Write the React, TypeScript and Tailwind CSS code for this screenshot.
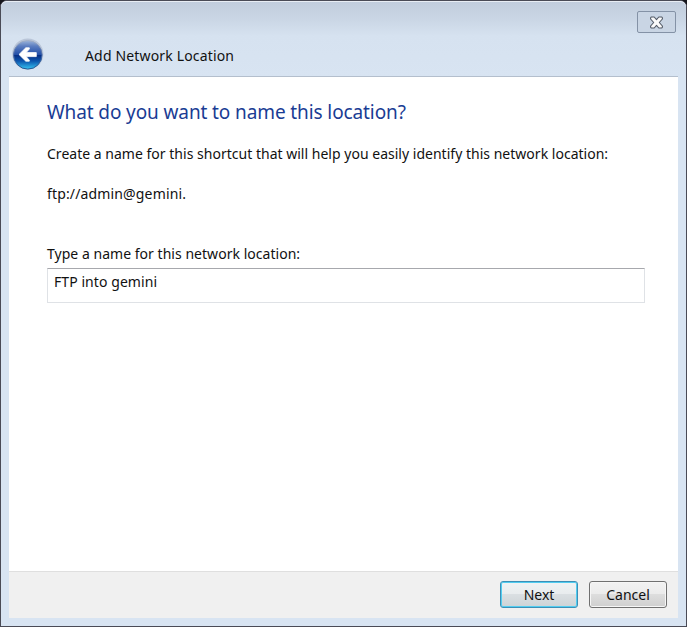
import { useState } from "react";

function BackIcon() {
  return (
    <svg viewBox="0 0 34 34" className="h-[34px] w-[34px]" aria-hidden="true">
      <defs>
        <linearGradient id="orb" x1="0" y1="0" x2="0" y2="1">
          <stop offset="0" stopColor="#9db5da" />
          <stop offset="0.2" stopColor="#5b7dc0" />
          <stop offset="0.49" stopColor="#2450a8" />
          <stop offset="0.5" stopColor="#062a80" />
          <stop offset="0.72" stopColor="#0c56ae" />
          <stop offset="1" stopColor="#35c4f2" />
        </linearGradient>
        <linearGradient id="rim" x1="0" y1="0" x2="0" y2="1">
          <stop offset="0" stopColor="#a3b0c6" />
          <stop offset="0.5" stopColor="#4d6ba5" />
          <stop offset="1" stopColor="#245792" />
        </linearGradient>
      </defs>
      <circle cx="16.8" cy="16" r="15.6" fill="#b9c5d8" />
      <circle cx="16.8" cy="16.8" r="14.3" fill="url(#orb)" stroke="url(#rim)" strokeWidth="1" />
      <path
        d="M8 16.5 L14.8 9.8 H18.3 V11 L15.2 14.6 H25.3 V18.6 H15.2 L18.3 22.2 V23.2 H14.8 Z"
        fill="#fff"
        stroke="#fff"
        strokeWidth="0.8"
        strokeLinejoin="round"
      />
    </svg>
  );
}

function CloseIcon() {
  return (
    <svg viewBox="0 0 15 13" className="h-[13px] w-[15px]" aria-hidden="true">
      <path
        d="M2.2 1 H5.2 L7.5 3.6 L9.8 1 H12.8 L13.4 1.8 V3 L10.3 6.5 L13.4 10 V11.2 L12.8 12 H9.8 L7.5 9.4 L5.2 12 H2.2 L1.6 11.2 V10 L4.7 6.5 L1.6 3 V1.8 Z"
        fill="#fafafa"
        stroke="#535a66"
        strokeWidth="1.1"
        strokeLinejoin="round"
      />
    </svg>
  );
}

export default function App() {
  const [name, setName] = useState("FTP into gemini");
  return (
    <div className="h-[627px] w-[687px] overflow-hidden bg-[#15151b] font-['Noto_Sans',sans-serif] text-[14px] leading-5 text-[#111]">
      <div className="flex h-full flex-col rounded-t-[7px] border border-[#4a4b56] bg-[#d8e4f2] px-2 pb-2">
        <header className="-mx-2 flex h-[75px] shrink-0 flex-col rounded-t-[6px] border-t border-[#e8edf4] bg-[linear-gradient(#c1cddd_0px,#c9d5e4_16px,#d6e2f0_34px,#d8e4f2_75px)] px-2">
          <div className="flex h-[35px] shrink-0 justify-end pt-[9px] pr-[2px]">
            <button aria-label="Close" className="flex h-[22px] w-[39px] items-center justify-center rounded-[2px] border border-[#8492a6] bg-[#c9d5e4]">
              <CloseIcon />
            </button>
          </div>
          <div className="flex h-[36px] items-center">
            <button aria-label="Back" className="ml-[2px]"><BackIcon /></button>
            <h1 className="mt-[2px] ml-[40px] tracking-[0.16px] whitespace-nowrap">Add Network Location</h1>
          </div>
        </header>
        <main className="flex grow flex-col border-t border-[#b4bfcd] bg-white pt-[22px] pr-[33px] pl-[38px]">
          <h2 className="text-[19px] leading-[26px] tracking-[-0.11px] whitespace-nowrap text-[#1a3c94]">What do you want to name this location?</h2>
          <p className="mt-[19px] tracking-[0.015px] whitespace-nowrap">Create a name for this shortcut that will help you easily identify this network location:</p>
          <p className="mt-5 tracking-[0.15px] whitespace-nowrap">ftp://admin@gemini.</p>
          <label htmlFor="location-name" className="mt-10 tracking-[0.03px] whitespace-nowrap">Type a name for this network location:</label>
          <input
            id="location-name"
            value={name}
            onChange={(e) => setName(e.target.value)}
            className="mt-[4px] h-[35px] w-full border border-[#dfe2e6] border-t-[#a7a8ad] bg-white px-[6px] pb-[8px] tracking-[0.07px] outline-none"
          />
        </main>
        <footer className="flex h-[47px] shrink-0 items-start justify-end gap-[11px] border-t border-[#dfdfdf] bg-[#f0f0f0] pt-[9px] pr-[11px]">
          <button className="h-[27px] w-[78px] rounded-[3px] border border-[#3c8fb6] bg-[linear-gradient(#f1f3f4_0%,#e8ecee_49%,#dadfe2_50%,#cdd3d6_100%)] shadow-[inset_0_0_0_1px_#52cdf0]">Next</button>
          <button className="h-[27px] w-[78px] rounded-[3px] border border-[#707070] bg-[linear-gradient(#f2f2f2_0%,#ebebeb_49%,#dddddd_50%,#cfcfcf_100%)] shadow-[inset_0_0_0_1px_#f6f6f6]">Cancel</button>
        </footer>
      </div>
    </div>
  );
}
